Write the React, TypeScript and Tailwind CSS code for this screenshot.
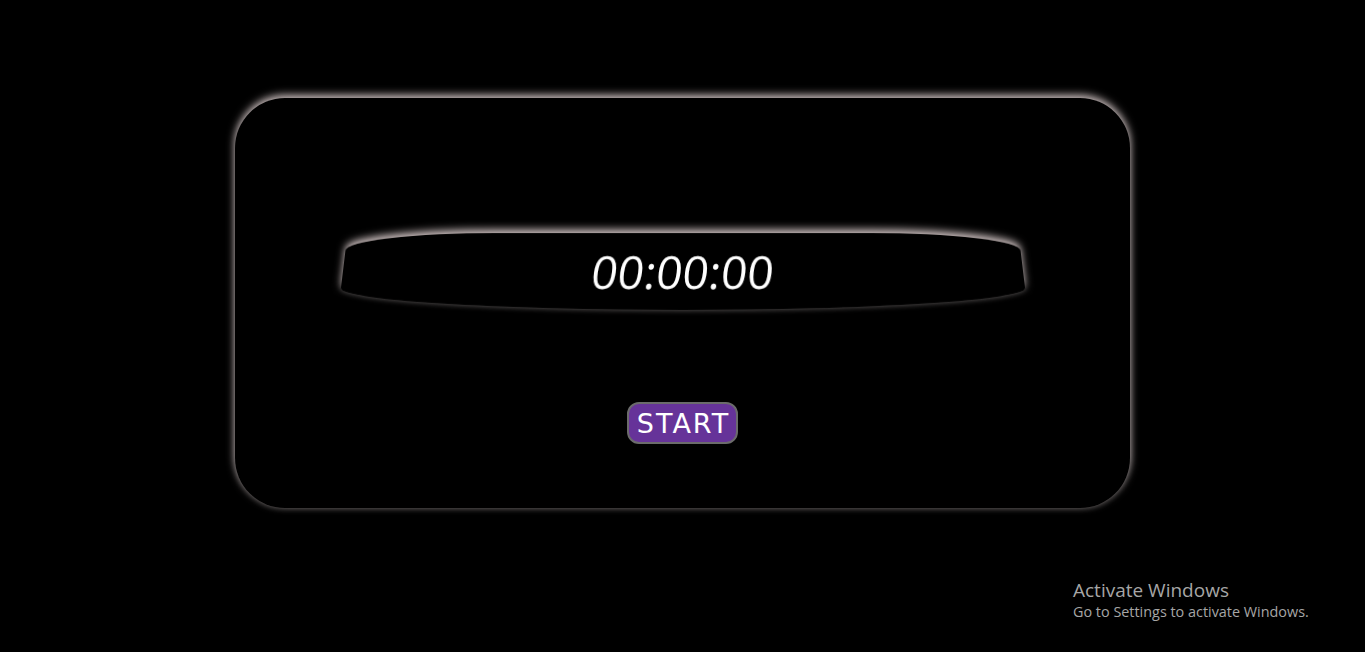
export default function App() {
  return (
    <main className="relative min-h-[652px] w-full bg-black font-['Open_Sans',sans-serif]">
      <div className="flex justify-center pt-[98px]">
        <div className="flex h-[410px] w-[895px] flex-col items-center rounded-[50px] bg-black shadow-[0_-3px_9px_rgba(235,220,220,0.85),0_0_7px_rgba(255,255,255,0.16)]">
          <div className="mt-[134px] [perspective:500px]">
            <div className="flex h-[78px] w-[680px] items-center justify-center rounded-[150px_150px_340px_340px/18px_18px_22px_22px] bg-black shadow-[0_-4px_9px_rgba(235,220,220,0.85),0_0_6px_rgba(255,255,255,0.16)] [transform:rotateX(10deg)]">
              <span className="inline-block -skew-x-[7deg] text-[46px] leading-none text-white">00:00:00</span>
            </div>
          </div>
          <button
            type="button"
            className="mt-[92px] h-[42px] rounded-[12px] border-2 border-[#6b6b6b] bg-[#663399] pl-[8px] pr-[6px] font-['DejaVu_Sans',sans-serif] text-[27px] leading-none tracking-[2px] text-white"
          >
            START
          </button>
        </div>
      </div>

      <div className="absolute left-[1073px] top-[578px] font-['Open_Sans',sans-serif] text-[#a6a6a6]">
        <p className="text-[19px] leading-[24px]">Activate Windows</p>
        <p className="text-[14.4px] leading-[20px]">Go to Settings to activate Windows.</p>
      </div>
    </main>
  );
}
